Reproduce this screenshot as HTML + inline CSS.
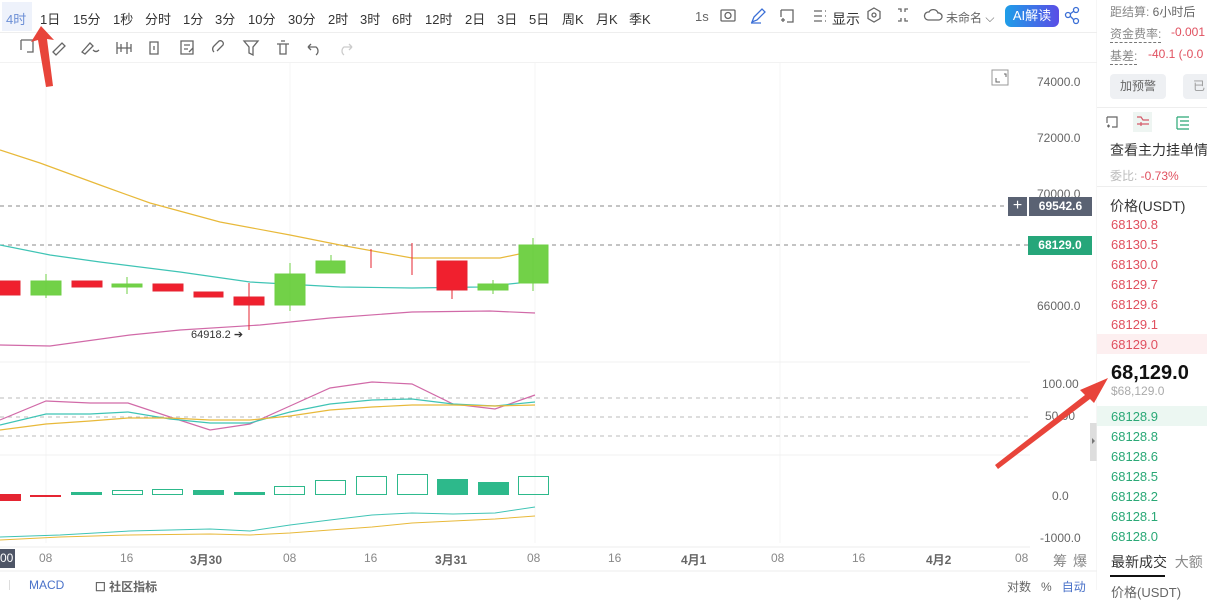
<!DOCTYPE html>
<html><head><meta charset="utf-8"><style>
*{margin:0;padding:0;box-sizing:border-box}
body{width:1207px;height:590px;overflow:hidden;background:#fff;font-family:"Liberation Sans","Noto Sans CJK SC",sans-serif;color:#333;position:relative}
.a{position:absolute;white-space:nowrap}
.tb span{position:absolute;top:9px;font-size:13px;color:#333}
.ax{position:absolute;font-size:12px;color:#666;left:1037px}
.r{font-size:13px;position:absolute;left:1111px;white-space:nowrap}
.red{color:#e0505f}.grn{color:#2aa876}
</style></head><body>
<!-- top toolbar -->
<div class="a" style="left:0;top:0;width:1097px;height:33px;border-bottom:1px solid #eee"></div>
<div class="a" style="left:2px;top:2px;width:30px;height:29px;background:#eef2fb"></div>
<div class="tb">
<span style="left:6px;color:#6c8fd6">4时</span><span style="left:40px">1日</span><span style="left:73px">15分</span><span style="left:113px">1秒</span><span style="left:145px">分时</span><span style="left:183px">1分</span><span style="left:215px">3分</span><span style="left:248px">10分</span><span style="left:288px">30分</span><span style="left:328px">2时</span><span style="left:360px">3时</span><span style="left:392px">6时</span><span style="left:425px">12时</span><span style="left:465px">2日</span><span style="left:497px">3日</span><span style="left:529px">5日</span><span style="left:562px">周K</span><span style="left:596px">月K</span><span style="left:629px">季K</span>
<span style="left:695px;color:#666">1s</span><span style="left:832px;font-size:14px">显示</span><span style="left:946px;color:#666;font-size:12px">未命名 ⌵</span>
</div>
<div class="a" style="left:1005px;top:5px;width:54px;height:22px;border-radius:6px;background:linear-gradient(90deg,#1e9ee8,#5a4de6);color:#fff;font-size:13px;text-align:center;line-height:22px">AI解读</div>
<svg class="a" style="left:0;top:0" width="1097" height="62" fill="none" stroke="#666" stroke-width="1.3">
<rect x="721" y="10" width="14" height="11" rx="1"/><circle cx="728" cy="15.5" r="3"/>
<path d="M752 22l2-5 8-8 3 3-8 8z M751 23h10" stroke="#3b6fd6"/>
<path d="M781 10h12v12h-6 M781 10v7 M781 20h4 M783 18v4"/>
<path d="M814 11h8M814 16h8M814 21h8M825 11h1M825 16h1M825 21h1"/>
<path d="M874 8l6 3.5v7l-6 3.5-6-3.5v-7z"/><circle cx="874" cy="15" r="2"/>
<path d="M898 9h3v3M908 9h-3v3M898 21h3v-3M908 21h-3v-3"/>
<path d="M928 20a4 4 0 0 1 1-8a5 5 0 0 1 9 1a3.5 3.5 0 0 1 1 7z"/>
<circle cx="1068" cy="15" r="2.5" stroke="#3b6fd6"/><circle cx="1076" cy="10" r="2.5" stroke="#3b6fd6"/><circle cx="1076" cy="21" r="2.5" stroke="#3b6fd6"/><path d="M1070 14l4-3M1070 16l4 4" stroke="#3b6fd6"/>
<path d="M21 40h12v12h-6M21 40v10"/>
<path d="M53 52l9-9 3 3-9 9z"/>
<path d="M82 52l8-9 3 3-8 8zM93 50q3 3 6 0"/>
<path d="M117 42v12M121 44v8M127 42v12M131 44v8M117 48h14"/>
<path d="M150 42h8v12h-8zM154 46v4"/>
<path d="M181 41h12v13h-12zM184 45h6M184 49h4M189 52l4-4"/>
<path d="M214 52a4 4 0 0 1 0-6l5-5a3 3 0 0 1 4 4l-6 6"/>
<path d="M244 41h14l-5 6v8l-4-2v-6z"/>
<path d="M277 44h12M280 44v10h6v-10M281 41h4"/>
<path d="M308 47h8a5 5 0 0 1 0 8M308 47l3-3M308 47l3 3"/>
<path d="M352 47h-8a5 5 0 0 0 0 8M352 47l-3-3M352 47l-3 3" stroke="#ccc"/>
</svg>
<div class="a" style="left:0;top:62px;width:1097px;height:1px;background:#f2f2f2"></div>
<!-- chart -->
<svg class="a" style="left:0;top:0" width="1097" height="590" fill="none">
<g stroke="#f5f5f5"><path d="M46 63v480M290 63v480M535 63v480M780 63v480"/></g>
<path d="M0 206H1010M0 245H1030" stroke="#888" stroke-dasharray="4 4"/>
<path d="M0 150L40 163L100 185L150 203L220 222L290 235L340 245L412 258L500 258L548 248" stroke="#e8b93a" stroke-width="1.2"/>
<path d="M0 245L50 255L100 262L180 272L250 282L340 287L412 288L480 287L548 280" stroke="#3fc4b5" stroke-width="1.2"/>
<path d="M0 345L50 346L130 335L180 330L260 325L330 318L412 312L490 311L535 313" stroke="#d16aa8" stroke-width="1.2"/>
<g stroke="#e52532" fill="#f0202e">
<rect x="-2" y="281" width="22" height="14"/><rect x="72" y="281" width="30" height="6"/><rect x="153" y="284" width="30" height="7"/><rect x="194" y="292" width="29" height="5"/><rect x="234" y="297" width="30" height="8"/><path d="M249 283v47M412 243v32M371 249v19M452 290v9"/><rect x="437" y="261" width="30" height="29"/></g>
<g stroke="#6fcf45" fill="#72d148">
<rect x="31" y="281" width="30" height="14"/><rect x="112" y="284" width="30" height="3"/><rect x="275" y="274" width="30" height="31"/><rect x="316" y="261" width="29" height="12"/><rect x="478" y="284" width="30" height="6"/><rect x="519" y="245" width="29" height="38"/><path d="M46 274v24M127 277v17M290 263v48M331 255v6M493 280v14M533 238v53"/></g>
<text x="191" y="338" font-size="11" fill="#333" font-family="Liberation Sans">64918.2 ➔</text>
<path d="M0 362H1030M0 455H1030" stroke="#f0f0f0"/>
<path d="M0 398H1030M0 417H1030M0 436H1030" stroke="#bbb" stroke-dasharray="4 4"/>
<path d="M0 420L46 401L90 403L128 403L170 417L210 430L250 424L290 406L330 388L372 382L412 384L453 404L495 409L535 395" stroke="#d16aa8" stroke-width="1.2"/>
<path d="M0 425L46 414L90 414L128 412L170 419L210 423L250 423L290 412L330 404L372 400L412 399L453 404L495 406L535 402" stroke="#3fc4b5" stroke-width="1.2"/>
<path d="M0 430L46 424L90 421L128 418L170 418L210 420L250 420L290 416L330 410L372 407L412 405L453 405L495 406L535 405" stroke="#e8b93a" stroke-width="1.2"/>
<g fill="#e52532"><rect x="0" y="494" width="21" height="7"/><rect x="30" y="495" width="31" height="2"/></g>
<g fill="#2db98b"><rect x="71" y="492" width="31" height="3"/><rect x="193" y="490" width="31" height="5"/><rect x="234" y="492" width="31" height="3"/><rect x="437" y="479" width="31" height="16"/><rect x="478" y="482" width="31" height="13"/></g>
<g stroke="#2db98b" fill="none"><rect x="112.5" y="490.5" width="30" height="4"/><rect x="152.5" y="489.5" width="30" height="5"/><rect x="274.5" y="486.5" width="30" height="8"/><rect x="315.5" y="480.5" width="30" height="14"/><rect x="356.5" y="476.5" width="30" height="18"/><rect x="397.5" y="474.5" width="30" height="20"/><rect x="518.5" y="476.5" width="30" height="18"/></g>
<path d="M0 537L60 535L130 531L210 529L250 531L290 525L330 520L372 515L412 513L453 514L495 513L535 507" stroke="#3fc4b5"/>
<path d="M0 540L60 537L130 535L210 534L250 535L290 533L330 530L372 527L412 523L453 521L495 519L535 516" stroke="#e8b93a"/>
<path d="M0 547H1030M0 571H1097" stroke="#eee"/>
<rect x="992" y="70" width="16" height="15" stroke="#999"/><path d="M996 78v4h4M1004 74h2v3" stroke="#666"/>
<rect x="1090" y="423" width="7" height="38" fill="#ddd"/><path d="M1092 438l3 3-3 3z" fill="#777"/>
<path d="M1097 0V590" stroke="#eee"/>
</svg>
<!-- axis labels -->
<div class="ax" style="top:75px">74000.0</div>
<div class="ax" style="top:131px">72000.0</div>
<div class="ax" style="top:187px">70000.0</div>
<div class="ax" style="top:299px">66000.0</div>
<div class="a" style="left:1008px;top:197px;width:19px;height:19px;background:#5a6273;color:#fff;font-size:16px;text-align:center;line-height:18px">+</div>
<div class="a" style="left:1029px;top:197px;width:63px;height:19px;background:#5a6273;color:#fff;font-size:12px;font-weight:bold;text-align:center;line-height:19px">69542.6</div>
<div class="a" style="left:1028px;top:236px;width:64px;height:19px;background:#26a67a;color:#fff;font-size:12px;font-weight:bold;text-align:center;line-height:19px">68129.0</div>
<div class="ax" style="left:1042px;top:377px">100.00</div>
<div class="ax" style="left:1045px;top:409px">50.00</div>
<div class="ax" style="left:1052px;top:489px">0.0</div>
<div class="ax" style="left:1040px;top:531px">-1000.0</div>
<!-- time axis -->
<div class="a" style="left:0;top:549px;width:15px;height:19px;background:#4e5566;color:#fff;font-size:12px;line-height:19px">00</div>
<div class="a" style="top:551px;font-size:12px;color:#888;width:1097px;height:16px">
<span class="a" style="left:39px">08</span><span class="a" style="left:120px">16</span><span class="a" style="left:190px;color:#666;font-weight:bold">3月30</span><span class="a" style="left:283px">08</span><span class="a" style="left:364px">16</span><span class="a" style="left:435px;color:#666;font-weight:bold">3月31</span><span class="a" style="left:527px">08</span><span class="a" style="left:608px">16</span><span class="a" style="left:681px;color:#666;font-weight:bold">4月1</span><span class="a" style="left:771px">08</span><span class="a" style="left:852px">16</span><span class="a" style="left:926px;color:#666;font-weight:bold">4月2</span><span class="a" style="left:1015px">08</span><span class="a" style="left:1053px;font-size:14px">筹</span><span class="a" style="left:1073px;font-size:14px">爆</span></div>
<div class="a" style="top:578px;left:29px;font-size:12px;color:#4a72c9">MACD</div>
<div class="a" style="top:578px;left:95px;font-size:12px;color:#666;font-weight:bold">☐ 社区指标</div>
<div class="a" style="top:578px;left:1007px;font-size:12px;color:#666">对数 &nbsp; % &nbsp; <span style="color:#4a72c9">自动</span></div>
<div class="a" style="left:9px;top:580px;width:1px;height:10px;background:#ddd"></div>
<!-- right panel -->
<div class="r" style="top:3px;font-size:12px;left:1110px;color:#888">距结算: <span style="color:#666">6小时后</span></div>
<div class="r" style="top:25px;font-size:12px;left:1110px;color:#888;border-bottom:1px dashed #777">资金费率:</div><div class="a red" style="top:25px;left:1171px;font-size:12px">-0.001</div>
<div class="r" style="top:47px;font-size:12px;left:1110px;color:#888;border-bottom:1px dashed #777">基差:</div><div class="a red" style="top:47px;left:1148px;font-size:12px">-40.1 (-0.0</div>
<div class="a" style="left:1110px;top:74px;width:56px;height:25px;background:#eef0f3;border-radius:4px;font-size:12px;color:#666;text-align:center;line-height:25px">加预警</div>
<div class="a" style="left:1183px;top:74px;width:30px;height:25px;background:#eef0f3;border-radius:4px;font-size:12px;color:#999;line-height:25px;padding-left:10px">已</div>
<div class="a" style="left:1097px;top:107px;width:110px;height:1px;background:#eee"></div>
<svg class="a" style="left:1100px;top:110px" width="107" height="26" fill="none" stroke-width="1.2"><path d="M7 7h10v10h-5M7 7v6M7 16h3M8.5 14.5v3" stroke="#666"/><rect x="33" y="2" width="19" height="20" fill="#eef5f2" stroke="none"/><path d="M37 7h4l2 3h6M37 14h12M41 16v-4" stroke="#d45a6a"/><path d="M77 7h12M80 11h9M80 15h9M77 19h12M77 7v12" stroke="#2aa876"/></svg>
<div class="r" style="top:140px;font-size:14px;left:1110px">查看主力挂单情</div>
<div class="r" style="top:167px;font-size:12px;left:1110px;color:#bbb">委比: <span class="red">-0.73%</span></div>
<div class="a" style="left:1097px;top:186px;width:110px;height:1px;background:#eee"></div>
<div class="r" style="top:196px;font-size:14px;left:1110px">价格(USDT)</div>
<div class="a" style="left:1097px;top:334px;width:110px;height:20px;background:#fdeff0"></div>
<div class="r red" style="top:217px">68130.8</div>
<div class="r red" style="top:237px">68130.5</div>
<div class="r red" style="top:257px">68130.0</div>
<div class="r red" style="top:277px">68129.7</div>
<div class="r red" style="top:297px">68129.6</div>
<div class="r red" style="top:317px">68129.1</div>
<div class="r red" style="top:337px">68129.0</div>
<div class="r" style="top:362px;font-size:20px;font-weight:bold;color:#111">68,129.0</div>
<div class="r" style="top:384px;font-size:12px;color:#aaa">$68,129.0</div>
<div class="a" style="left:1097px;top:406px;width:110px;height:20px;background:#ecf7f2"></div>
<div class="r grn" style="top:409px">68128.9</div>
<div class="r grn" style="top:429px">68128.8</div>
<div class="r grn" style="top:449px">68128.6</div>
<div class="r grn" style="top:469px">68128.5</div>
<div class="r grn" style="top:489px">68128.2</div>
<div class="r grn" style="top:509px">68128.1</div>
<div class="r grn" style="top:529px">68128.0</div>
<div class="r" style="top:552px;font-size:14px">最新成交 &nbsp;<span style="color:#888">大额</span></div>
<div class="a" style="left:1110px;top:575px;width:55px;height:2px;background:#111"></div>
<div class="r" style="top:582px;font-size:13px;color:#666">价格(USDT)</div>
<!-- red arrows -->
<svg class="a" style="left:0;top:0" width="1207" height="590">
<path d="M46 87L38 40L31 42L41 26L54 40L47 39L53 86Z" fill="#e8443a"/>
<path d="M995 465L1085 395L1080 390L1108 378L1094 403L1090 399L998 469Z" fill="#e8443a"/>
</svg>
</body></html>
